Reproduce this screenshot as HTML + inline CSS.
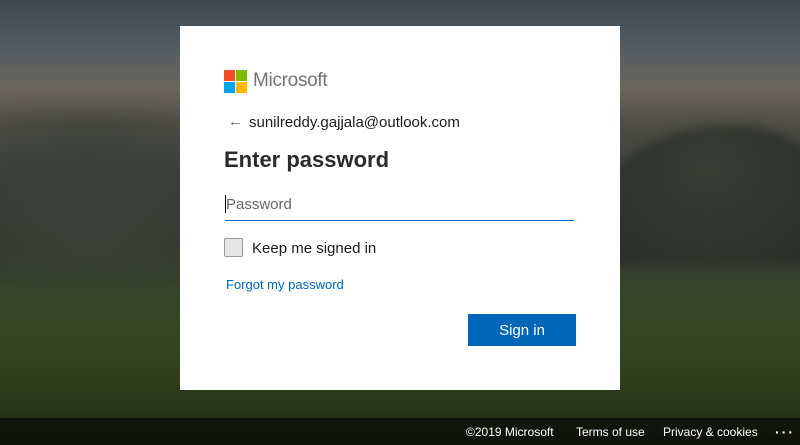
<!DOCTYPE html>
<html><head><style>
*{margin:0;padding:0;box-sizing:border-box}
body{width:800px;height:445px;overflow:hidden;position:relative;font-family:"Liberation Sans",sans-serif;
background:linear-gradient(180deg,#3e4850 0%,#525a60 10%,#6b665d 20%,#4d4c46 28%,#3a3d39 40%,#343a30 55%,#37452a 68%,#33431f 80%,#232a16 100%);}
.hill{position:absolute}
.card{position:absolute;left:180px;top:26px;width:440px;height:364px;background:#fff}
.logo{position:absolute;left:44px;top:44px;width:24px;height:24px}
.logo i{position:absolute;width:11px;height:11px}
.t{position:absolute;white-space:nowrap}
.foot{position:absolute;left:0;top:418px;width:800px;height:27px;background:rgba(0,0,0,.55)}
.foot span{position:absolute;top:7px;color:#fff;font-size:12px}
</style></head><body>
<div class="hill" style="left:600px;top:125px;width:220px;height:140px;border-radius:60% 40% 0 0;background:radial-gradient(ellipse at 50% 30%,#3a3c36,#2a2e28);filter:blur(4px)"></div>
<div class="hill" style="left:0;top:110px;width:180px;height:160px;background:radial-gradient(ellipse at 50% 60%,#3c403a,rgba(50,52,48,0));filter:blur(6px)"></div>
<div class="card">
<div class="logo"><i style="left:0;top:0;background:#f25022"></i><i style="left:12px;top:0;background:#7fba00"></i><i style="left:0;top:12px;background:#00a4ef"></i><i style="left:12px;top:12px;background:#ffb900"></i></div>
<div class="t" style="left:73px;top:44px;font-size:19px;color:#737373;letter-spacing:-.3px">Microsoft</div>
<div class="t" style="left:48px;top:87px;font-size:15px;color:#666">←</div>
<div class="t" style="left:69px;top:88px;font-size:15px;color:#1b1b1b">sunilreddy.gajjala@outlook.com</div>
<div class="t" style="left:44px;top:121px;font-size:22px;font-weight:bold;color:#2b2b2b">Enter password</div>
<div style="position:absolute;left:45px;top:169px;width:1px;height:18px;background:#000"></div>
<div class="t" style="left:46px;top:170px;font-size:15px;color:#666">Password</div>
<div style="position:absolute;left:45px;top:194px;width:349px;height:1px;background:#0067b8"></div>
<div style="position:absolute;left:44px;top:212px;width:19px;height:19px;border:1px solid #999;border-radius:2px;background:#e6e6e6"></div>
<div class="t" style="left:72px;top:214px;font-size:15px;color:#1b1b1b">Keep me signed in</div>
<div class="t" style="left:46px;top:251px;font-size:13px;color:#0067b8">Forgot my password</div>
<div style="position:absolute;left:288px;top:288px;width:108px;height:32px;background:#0067b8;color:#fff;font-size:15px;text-align:center;line-height:34px">Sign in</div>
</div>
<div class="foot">
<span style="left:466px">©2019 Microsoft</span>
<span style="left:576px">Terms of use</span>
<span style="left:663px">Privacy &amp; cookies</span>
<span style="left:775px;top:6px;font-weight:bold;font-size:14px;letter-spacing:2px">···</span>
</div>
</body></html>
